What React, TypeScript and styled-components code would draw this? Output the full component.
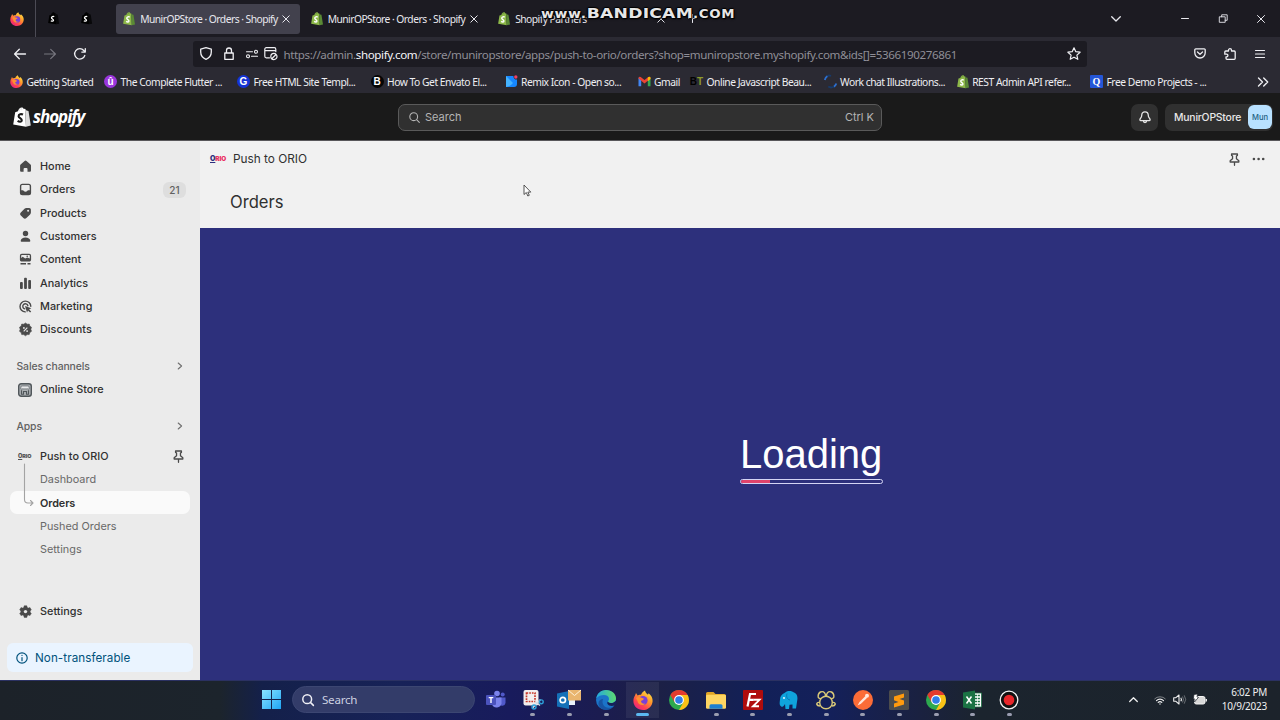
import React from 'react';
import styled, { createGlobalStyle } from 'styled-components';

const Global = createGlobalStyle`
  * { box-sizing: border-box; }
  body { margin: 0; background: #1c1b22; overflow: hidden; }
  svg { display: block; flex: none; overflow: visible; }
`;

const segoe = `'Noto Sans', 'Open Sans', sans-serif`;
const inter = `Inter, 'Liberation Sans', sans-serif`;

const Screen = styled.div`
  position: relative;
  width: 1280px;
  height: 720px;
  display: flex;
  flex-direction: column;
  font-family: ${inter};
  overflow: hidden;
`;

/* ---------- Browser chrome ---------- */
const TabBar = styled.div`
  height: 37px;
  flex: none;
  display: flex;
  align-items: center;
  background: #1c1b22;
  color: #e8e8ee;
  font-family: ${segoe};
`;
const PinnedTab = styled.div<{ $w: number; $line?: boolean }>`
  width: ${p => p.$w}px;
  height: 37px;
  display: flex;
  align-items: center;
  justify-content: center;
  padding-right: ${p => (p.$line ? 2 : 0)}px;
  border-right: ${p => (p.$line ? '1px solid #4c4b55' : '0')};
`;
const Tab = styled.div<{ $w: number; $active?: boolean }>`
  width: ${p => p.$w}px;
  height: 30px;
  display: flex;
  align-items: center;
  padding-left: 7px;
  padding-right: 10px;
  gap: 5px;
  border-radius: 3px;
  background: ${p => (p.$active ? '#42414d' : 'transparent')};
`;
const TabTitle = styled.span`
  flex: 1;
  min-width: 0;
  font-size: 10.3px;
  letter-spacing: -0.54px;
  white-space: nowrap;
`;
const WindowButtons = styled.div`
  margin-left: auto;
  display: flex;
  align-items: center;
  padding-right: 12px;
`;
const IconSlot = styled.div<{ $w: number; $gap?: number }>`
  width: ${p => p.$w}px;
  margin-left: ${p => p.$gap ?? 0}px;
  flex: none;
  display: flex;
  align-items: center;
  justify-content: center;
`;
const NavBar = styled.div`
  height: 33px;
  flex: none;
  display: flex;
  align-items: center;
  background: #2b2a33;
  color: #f0f0f4;
  padding: 0 5px;
`;
const UrlBox = styled.div`
  width: 894px;
  height: 26px;
  margin-left: 98px;
  display: flex;
  align-items: center;
  background: #1c1b22;
  border-radius: 3px;
  font-family: ${segoe};
`;
const UrlText = styled.span`
  flex: 1;
  min-width: 0;
  margin-left: 5.5px;
  padding-top: 1px;
  font-size: 11.6px;
  letter-spacing: -0.39px;
  color: #8f8e96;
  white-space: nowrap;
  b { font-weight: 400; color: #f4f4f8; }
`;
const NavRight = styled.div`
  margin-left: auto;
  display: flex;
`;
const Bookmarks = styled.div`
  height: 23px;
  flex: none;
  display: flex;
  align-items: center;
  background: #2b2a33;
  color: #eeeef2;
  padding-left: 10px;
  padding-right: 11px;
  font-family: ${segoe};
`;
const Bookmark = styled.div<{ $w: number }>`
  width: ${p => p.$w}px;
  flex: none;
  display: flex;
  align-items: center;
  gap: 3.5px;
  font-size: 10.3px;
  letter-spacing: -0.47px;
  white-space: nowrap;
`;

/* ---------- Shopify ---------- */
const TopBar = styled.header`
  height: 48px;
  flex: none;
  display: flex;
  align-items: center;
  background: #1a1a1a;
  border-bottom: 1px solid #58575a;
  padding: 1px 7px 0 13px;
`;
const Brand = styled.div`
  width: 385px;
  display: flex;
  align-items: center;
  gap: 2px;
  color: #fff;
  font: italic 700 17px 'Open Sans', sans-serif;
  letter-spacing: -1.05px;
`;
const BrandName = styled.span`
  line-height: 20px;
  margin-top: -1px;
`;
const SearchField = styled.div`
  width: 484px;
  height: 27px;
  display: flex;
  align-items: center;
  gap: 5px;
  padding: 0 7px 0 10px;
  background: #303030;
  border: 1px solid #5a5a5a;
  border-radius: 7px;
  color: #b5b5b5;
  font-size: 11px;
`;
const Hotkey = styled.span` margin-left: auto; `;
const BellButton = styled.div`
  width: 27px;
  height: 27px;
  margin-left: auto;
  display: flex;
  align-items: center;
  justify-content: center;
  background: #303030;
  border-radius: 7px;
`;
const StoreButton = styled.div`
  width: 108px;
  height: 27px;
  margin-left: 7px;
  padding-left: 9px;
  padding-right: 1px;
  display: flex;
  align-items: center;
  justify-content: space-between;
  background: #303030;
  border-radius: 7px;
  color: #e8e8e8;
  font-size: 10.4px;
  letter-spacing: -0.2px;
  font-weight: 500;
`;
const Avatar = styled.div`
  width: 24px;
  height: 24px;
  display: flex;
  align-items: center;
  justify-content: center;
  background: #b8e1ff;
  border-radius: 6px;
  color: #1d6083;
  font-size: 7.6px;
  letter-spacing: 0;
`;
const Body = styled.div`
  height: 539px;
  flex: none;
  display: flex;
`;
const Sidebar = styled.nav`
  width: 200px;
  display: flex;
  flex-direction: column;
  background: #ebebeb;
  padding-top: 13.3px;
`;
const NavRow = styled.div<{ $kind?: 'sub' | 'active' }>`
  height: 23.33px;
  flex: none;
  margin: 0 10px;
  padding: 1px 5px 0 8px;
  display: flex;
  align-items: center;
  gap: 8px;
  border-radius: 7px;
  background: ${p => (p.$kind === 'active' ? '#fafafa' : 'transparent')};
  color: ${p => (p.$kind === 'sub' ? '#686868' : '#303030')};
  font-size: 10.83px;
  font-weight: ${p => (p.$kind === 'active' ? 600 : p.$kind === 'sub' ? 400 : 500)};
  letter-spacing: ${p => (p.$kind === 'active' ? -0.1 : 0.02)}px;
`;
const RowIcon = styled.div`
  width: 14px;
  display: flex;
  justify-content: center;
  color: #4a4a4a;
`;
const RowEnd = styled.div` margin-left: auto; `;
const Count = styled.div`
  width: 23px;
  height: 16px;
  margin-right: -1px;
  display: flex;
  align-items: center;
  justify-content: center;
  background: #dedede;
  border-radius: 6px;
  color: #616161;
  font-size: 10px;
`;
const SectionHead = styled.div<{ $after?: number }>`
  height: 23.33px;
  flex: none;
  margin: 13.3px 17px ${p => p.$after ?? 0}px 16.5px;
  padding-top: 1px;
  display: flex;
  align-items: center;
  justify-content: space-between;
  color: #616161;
  font-size: 10.4px;
  letter-spacing: -0.1px;
  font-weight: 550;
`;
const SidebarFoot = styled.div`
  margin-top: 39px;
  display: flex;
  flex-direction: column;
`;
const Notice = styled.div`
  height: 29px;
  margin: 19.5px 7px 0;
  padding: 1.5px 0 0 9px;
  display: flex;
  align-items: center;
  gap: 7px;
  background: #eaf4ff;
  border-radius: 6px;
  color: #00527c;
  font-size: 11.67px;
  letter-spacing: 0.07px;
`;
const Main = styled.main`
  flex: 1;
  display: flex;
  flex-direction: column;
  background: #f1f1f1;
  color: #303030;
`;
const AppBar = styled.div`
  height: 36px;
  display: flex;
  align-items: center;
  padding: 0 15px 0 10px;
  font-size: 11.8px;
`;
const AppName = styled.span` margin-left: 7px; `;
const AppTools = styled.div`
  margin-left: auto;
  display: flex;
  align-items: center;
  gap: 11px;
  color: #4a4a4a;
`;
const PageTitle = styled.div`
  height: 51px;
  display: flex;
  align-items: center;
  padding-left: 30px;
  padding-bottom: 2px;
  font-size: 16.6px;
`;
const Stage = styled.div`
  flex: 1;
  display: flex;
  flex-direction: column;
  align-items: flex-start;
  padding: 203px 0 0 540px;
  background: #2d307c;
`;
const LoadingText = styled.div`
  height: 46px;
  line-height: 46px;
  color: #fff;
  font-family: 'Liberation Sans', Arial, sans-serif;
  font-size: 40px;
`;
const Progress = styled.div`
  width: 143px;
  height: 5px;
  margin-top: 2px;
  border: 1px solid #d4d4f4;
  border-radius: 3px;
  overflow: hidden;
`;
const ProgressFill = styled.div`
  width: 29px;
  height: 100%;
  background: #e0436b;
`;
const Pointer = styled.div`
  position: absolute;
  left: 523px;
  top: 184px;
`;
const Watermark = styled.div`
  position: absolute;
  left: 541px;
  top: 3px;
  height: 20px;
  display: flex;
  align-items: baseline;
  font-family: 'DejaVu Sans', sans-serif;
  font-weight: 700;
  line-height: 20px;
  color: #e6e6e6;
  text-shadow: 1px 1px 1px #000, -1px 0 1px #000, 0 -1px 1px #000, 0 1px 2px #000;
  transform: scaleX(1.16);
  transform-origin: 0 0;
`;
const Mark = styled.span<{ $s: number; $ls: number }>`
  font-size: ${p => p.$s}px;
  letter-spacing: ${p => p.$ls}px;
`;

/* ---------- Taskbar ---------- */
const Taskbar = styled.footer`
  height: 40px;
  flex: none;
  display: flex;
  align-items: center;
  border-top: 1px solid #2b3162;
  background: linear-gradient(90deg, #1c2229 0, #1c242c 220px, #14204a 262px, #172258 400px, #181b5c 510px, #1b1c50 600px, #1c2046 660px, #122058 760px, #14205a 830px, #1a2140 920px, #1b242e 980px, #1c232b 1280px);
  padding-left: 262px;
  padding-bottom: 2px;
  font-family: ${segoe};
`;
const TaskSearch = styled.div`
  width: 183px;
  height: 27px;
  margin-left: 11px;
  margin-right: 2.8px;
  padding-left: 9px;
  display: flex;
  align-items: center;
  gap: 8px;
  border-radius: 14px;
  background: #333c69;
  border: 1px solid #3c4672;
  color: #ccd0e0;
  font-size: 11.6px;
  letter-spacing: -0.25px;
`;
const TaskItem = styled.div<{ $active?: boolean }>`
  width: 36.67px;
  height: 37px;
  flex: none;
  display: flex;
  flex-direction: column;
  align-items: center;
  padding-top: 9px;
  gap: 3px;
  background: ${p => (p.$active ? 'linear-gradient(#ffffff10, #ffffff10) center / 33px 36px no-repeat' : 'none')};
`;
const Dot = styled.i<{ $active?: boolean }>`
  width: ${p => (p.$active ? 13 : 5)}px;
  height: 3px;
  border-radius: 2px;
  background: ${p => (p.$active ? '#5cb8f0' : '#9a9db0')};
`;
const Tray = styled.div`
  margin-left: auto;
  display: flex;
  align-items: center;
  padding-right: 13px;
`;
const Clock = styled.div`
  width: 52px;
  color: #f0f0f0;
  font-size: 10px;
  line-height: 13.3px;
  letter-spacing: -0.25px;
  text-align: right;
`;

/* ---------- Icons ---------- */
type S = { size?: number };
const Line = ({ d, w = 14, h, box, sw = 1.2, color = 'currentColor' }: { d: string; w?: number; h?: number; box?: string; sw?: number; color?: string }) => (
  <svg width={w} height={h ?? w} viewBox={box ?? `0 0 ${w} ${h ?? w}`} fill="none" stroke={color} strokeWidth={sw} strokeLinecap="round" strokeLinejoin="round">
    <path d={d} />
  </svg>
);
const Firefox = ({ size = 14 }: S) => (
  <svg width={size} height={size} viewBox="0 0 20 20">
    <defs>
      <linearGradient id="ffa" x1="0.9" y1="0" x2="0.2" y2="1">
        <stop offset="0" stopColor="#fff04a" /><stop offset="0.4" stopColor="#ff9a2b" /><stop offset="0.75" stopColor="#ff4050" /><stop offset="1" stopColor="#e0218a" />
      </linearGradient>
    </defs>
    <path d="M2 5.500 3 3l1.600 2.400C6 4.500 7 4.600 8 4.800 9 2.500 10.500 1.200 12 .5c.3 2 1.500 3 3 4.200l.6-1.500c2.700 2 4.200 4.700 4 8C19.300 16.300 15.300 20 10 20S.4 16.200.4 11C.4 8.800 1 7 2 5.500z" fill="url(#ffa)" />
    <circle cx="10" cy="10.600" r="4.600" fill="#7a3fd8" />
    <path d="M3 8c2-1.600 4-1 5.500-.2L11 8.700c-.3 1.500-2.500 1.300-3 2.600.2 2 2.200 3 4.300 2.300C10 16.500 5 15 4.500 11z" fill="#ff9130" />
  </svg>
);
const Bag = ({ size = 14, fill = '#8db849', side = '#5a8a35', ink = '#fff' }: S & { fill?: string; side?: string; ink?: string }) => (
  <svg width={size * 0.9} height={size} viewBox="0 0 18 20">
    <path d="M2.200 5.200 5 4.300C5.600 2 7 .4 8.800.4c1 0 1.600.7 2 1.700l1.200-.3 1 17.900L.2 17.400z" fill={fill} />
    <path d="M12 1.800l1.500 1.800 2 .3 2.300 14.700-4.800 1.100z" fill={side} />
    <path d="M6 4c.6-1.600 1.500-2.500 2.700-2.600M8.800 3.300c0-1-.2-1.600-.6-2" stroke={side} strokeWidth=".7" fill="none" />
    <path d="M10 7.500C8.300 6.700 5.600 7 5.600 9.200c0 2 3.200 2 3.200 4.100 0 1.800-2.400 1.800-4.200.6" stroke={ink} strokeWidth="2.100" fill="none" />
  </svg>
);
const Close = () => <Line w={8} d="M.8.8l6.400 6.400M7.200.8.8 7.200" sw={1} />;
const Chevron = () => <Line w={6} h={8} d="M1.200 1l3.400 3-3.400 3" sw={1.1} color="#707070" />;
const Pin = ({ size = 12 }: S) => (
  <Line w={size} box="0 0 12 12" d="M3.300.9h5.400v1.300l-.9.6v2.400l2.200 1.900v1.200H2V7.100l2.200-1.900V2.800l-.9-.6zM6 8.400v3" sw={1.2} color="#4a4a4a" />
);
const Chrome = ({ size = 20 }: S) => (
  <svg width={size} height={size} viewBox="0 0 20 20">
    <circle cx="10" cy="10" r="10" fill="#2da94f" />
    <path d="M10 5h8.660A10 10 0 0 1 10 20l4.330-7.500z" fill="#fbc116" />
    <path d="M1.340 5A10 10 0 0 1 18.660 5H10L5.670 12.500z" fill="#e33b2e" />
    <circle cx="10" cy="10" r="4.900" fill="#fff" /><circle cx="10" cy="10" r="3.800" fill="#2f7de9" />
  </svg>
);
const OrioMark = styled.span<{ $mono?: boolean }>`
  width: ${p => (p.$mono ? 14 : 16)}px;
  font: 900 ${p => (p.$mono ? 5.4 : 6.4)}px/8px ${inter};
  letter-spacing: -0.1px;
  color: ${p => (p.$mono ? '#555' : '#ea2f62')};
  white-space: nowrap;
`;
const OrioO = styled.span<{ $mono?: boolean }>`
  font-size: ${p => (p.$mono ? 5.6 : 7)}px;
  color: ${p => (p.$mono ? '#555' : '#2c2f7e')};
  text-decoration: underline;
`;
const Orio = ({ mono }: { mono?: boolean }) => (
  <OrioMark $mono={mono}><OrioO $mono={mono}>O</OrioO>RIO</OrioMark>
);

const ico = (children: React.ReactNode, s = 13) => (
  <svg width={s} height={s} viewBox="0 0 13 13" fill="currentColor">{children}</svg>
);
const Home = ico(<path d="M5.600.9a1.400 1.400 0 0 1 1.900 0l4 3.600c.3.300.5.700.5 1.100v4.900c0 .8-.6 1.300-1.300 1.300H8.500V9c0-.5-.4-.9-.9-.9H5.500c-.5 0-.9.4-.9.9v2.800H2.400c-.8 0-1.300-.6-1.300-1.300V5.600c0-.4.200-.8.500-1.100z" />);
const Inbox = ico(<path fillRule="evenodd" d="M3.400.7h6.200a2.500 2.500 0 0 1 2.500 2.500v6.500a2.500 2.500 0 0 1-2.500 2.500H3.400A2.500 2.500 0 0 1 .9 9.700V3.200A2.500 2.500 0 0 1 3.400.7zm0 1.400c-.7 0-1.100.5-1.100 1.100v4h1.500c.9 0 1.100 1.500 2.700 1.500s1.800-1.500 2.700-1.500h1.500v-4c0-.6-.4-1.100-1.100-1.100z" />);
const Tag = ico(<path fillRule="evenodd" d="M7.400 1.100h2.800c1 0 1.700.8 1.700 1.700v2.600c0 .8-.3 1.500-.8 2L7.400 11c-.9.900-2.200.9-3 0L1.800 8.500c-.9-.9-.9-2.200 0-3l3.700-3.700c.5-.5 1.200-.7 1.900-.7zm1.700 3.700a1 1 0 1 0 0-2 1 1 0 0 0 0 2z" />);
const Person = ico(<><circle cx="6.500" cy="3.500" r="2.700" /><path d="M6.500 7.500c2.700 0 4.800 1.500 4.800 3.300 0 .6-.4 1-1 1H2.700c-.6 0-1-.4-1-1 0-1.800 2.100-3.300 4.800-3.300z" /></>);
const Content = ico(<><path fillRule="evenodd" d="M2.800.8h7.400c1.100 0 1.900.8 1.900 1.900v4c0 1.100-.8 1.900-1.900 1.900H2.800C1.700 8.600.9 7.800.9 6.700v-4C.9 1.600 1.700.8 2.800.8zm0 1.300c-.4 0-.6.2-.6.6v2.200l1.500-1.100 2.500 1.800 2-1.200 2.600 1.100V2.700c0-.4-.2-.6-.6-.6z" /><circle cx="8.200" cy="3.200" r=".8" /><path d="M1.500 10h5.500v1.400H1.500zM8.500 10h3v1.400h-3z" /></>);
const Analytics = ico(<><rect x="1" y="5" width="2.800" height="7" rx=".9" /><rect x="5.100" y=".8" width="2.800" height="11.200" rx=".9" /><rect x="9.200" y="3" width="2.800" height="9" rx=".9" /></>);
const Marketing = ico(<><path d="M11.800 6.200A5.400 5.400 0 1 0 6.200 11.900M8.900 5.700a2.600 2.600 0 1 0-3.200 3.200" fill="none" stroke="currentColor" strokeWidth="1.400" strokeLinecap="round" /><path d="M6 6l6.300 2.300-2.200 1.100 2.100 2.100-1.100 1.100L9 10.500 8 12.500z" /></>);
const Discount = ico(<><path d="M6.500 0 8.200 1.200l2.100-.1.500 2 1.700 1.200-.7 2 .7 2-1.700 1.300-.6 2-2.100 0-1.600 1.200-1.700-1.200-2.100 0-.5-2L.5 8.300l.7-2-.7-2 1.700-1.200.5-2 2.100.1z" strokeWidth=".6" stroke="currentColor" strokeLinejoin="round" /><path d="M4.700 8.300l3.600-3.600" stroke="#ebebeb" strokeWidth="1.100" /><circle cx="4.900" cy="4.900" r=".9" fill="#ebebeb" /><circle cx="8.100" cy="8.100" r=".9" fill="#ebebeb" /></>);
const Gear = ico(<><path d="M5.200.8h2.600l.4 1.600 1.200.7 1.600-.5 1.300 2.300-1.200 1.100v1.200l1.200 1.100-1.300 2.300-1.600-.5-1.200.7-.4 1.600H5.200l-.4-1.600-1.200-.7-1.600.5L.7 8.300l1.200-1.100V6L.7 4.900 2 2.600l1.600.5 1.200-.7z" strokeWidth=".5" stroke="currentColor" strokeLinejoin="round" /><circle cx="6.500" cy="6.600" r="1.700" fill="#ebebeb" /></>);
const Store = (
  <svg width="14" height="14" viewBox="0 0 14 14">
    <rect x=".7" y=".7" width="12.600" height="12.600" rx="2.500" fill="#a9aeb1" stroke="#50565a" strokeWidth="1.400" />
    <path d="M3.300 3h7.400l.7 2.500c0 1-1.500 1-1.500 0 0 1-1.900 1-1.900 0 0 1-2 1-2 0 0 1-1.900 1-1.900 0 0 1-1.500 1-1.500 0z" fill="#e8eaeb" stroke="#50565a" strokeWidth=".6" />
    <path d="M3.500 7.200v4h2V8.500h3v2.700h2v-4" fill="none" stroke="#50565a" strokeWidth="1.100" />
  </svg>
);
const ArrowWrap = styled.div`
  position: absolute;
  left: 22px;
  top: 464px;
`;
const SubArrow = () => (
  <ArrowWrap>
    <Line w={12} h={46} d="M2.500 0v35.500q0 3.500 3.500 3.500h5M8.500 36.500 11 39l-2.500 2.500" sw={1.1} color="#a3a3a3" />
  </ArrowWrap>
);
const Spacer = styled.div` width: 14px; `;

const menu: [string, React.ReactNode][] = [
  ['Home', Home], ['Orders', Inbox], ['Products', Tag], ['Customers', Person],
  ['Content', Content], ['Analytics', Analytics], ['Marketing', Marketing], ['Discounts', Discount],
];

const Glyph = styled.span<{ $bg: string; $c?: string; $round?: boolean; $f?: string }>`
  width: 13px;
  height: 13px;
  flex: none;
  display: flex;
  align-items: center;
  justify-content: center;
  background: ${p => p.$bg};
  color: ${p => p.$c ?? '#fff'};
  border-radius: ${p => (p.$round ? '50%' : '1px')};
  font: 700 10px/13px ${p => p.$f ?? "'Liberation Sans', sans-serif"};
  letter-spacing: 0;
`;
const Olive = styled.span` color: #8d9a2c; `;

const bookmarks: { w: number; icon: React.ReactNode; text: string }[] = [
  { w: 94, text: 'Getting Started', icon: <Firefox size={13} /> },
  { w: 133, text: 'The Complete Flutter ...', icon: <Glyph $bg="#9a35dc" $round>û</Glyph> },
  { w: 133.5, text: 'Free HTML Site Templ...', icon: <Glyph $bg="#1433d6" $round>G</Glyph> },
  { w: 134, text: 'How To Get Envato El...', icon: <Glyph $bg="#050505" $round>B</Glyph> },
  {
    w: 133, text: 'Remix Icon - Open so...',
    icon: <svg width="13" height="13" viewBox="0 0 13 13"><path d="M1 1h7.500a3 3 0 0 0 3.500 3.500V9q0 3-3 3H1z" fill="#1687ff" /><path d="M1 1l7 7q-3 4-7 4z" fill="#45b3ff" /><circle cx="10.800" cy="2" r="1.700" fill="#ee3f63" /></svg>,
  },
  {
    w: 52.5, text: 'Gmail',
    icon: <svg width="13" height="13" viewBox="0 0 13 13"><path d="M.5 2.500v8.800h2.700V5z" fill="#4285f4" /><path d="M9.800 5v6.300h2.700V2.500z" fill="#34a853" /><path d="M.5 3.500Q.5 1 2.700 2l3.800 3 3.800-3q2.200-1 2.200 1.500L6.500 8.500z" fill="#ea4335" /><path d="M9.800 2.500v3.700l2.700-2.100V2.500q-1-1.500-2.700 0z" fill="#fbbc04" /></svg>,
  },
  { w: 133.5, text: 'Online Javascript Beau...', icon: <Glyph $bg="transparent" $c="#000"><span>B</span><Olive>T</Olive></Glyph> },
  {
    w: 133, text: 'Work chat Illustrations...',
    icon: <svg width="13" height="13" viewBox="0 0 13 13" fill="none" strokeWidth="1.800"><path d="M.8 5A6 6 0 0 1 3.500 1M12.300 8.500a6 6 0 0 1-2.500 3.300" stroke="#2c6fd0" /><path d="M3.500 1q1.500-1 3.500 0M9.800 11.800q-3 1.500-5.500-.3" stroke="#173a6a" /></svg>,
  },
  { w: 133.5, text: 'REST Admin API refer...', icon: <Bag size={13.5} /> },
  { w: 130, text: 'Free Demo Projects - ...', icon: <Glyph $bg="#2456d8" $f="'Liberation Serif', serif">Q</Glyph> },
];

const teams = <svg width="20" height="20" viewBox="0 0 20 20"><circle cx="11" cy="3.500" r="2.800" fill="#7b83eb" /><circle cx="16.700" cy="4.600" r="2" fill="#5059c9" /><path d="M13 7.500h6.500v5.500a3.500 3.500 0 0 1-6.500 1z" fill="#5059c9" /><path d="M6 7.500h9.500v6a5 5 0 0 1-9.500 1z" fill="#7b83eb" /><rect x="0" y="5" width="10" height="10" rx="1" fill="#4b53bc" /><path d="M2.700 7.600h4.600M5 7.600V13" stroke="#fff" strokeWidth="1.400" /></svg>;
const snip = <svg width="20" height="20" viewBox="0 0 20 20"><rect x=".5" y="0" width="15" height="15.500" rx="2" fill="#f2eeee" /><rect x="3.500" y="3" width="8.500" height="8.500" fill="none" stroke="#c8392b" strokeWidth="1.700" strokeDasharray="1.700 1" /><path d="M9.500 18 17.500 9.500M12 11.500l5 4" stroke="#d6dde4" strokeWidth="1.500" /><circle cx="11" cy="17" r="2" fill="none" stroke="#2d9fd8" strokeWidth="1.400" /><circle cx="18.300" cy="11.800" r="1.900" fill="none" stroke="#2d9fd8" strokeWidth="1.400" /></svg>;
const outlook = <svg width="24" height="20" viewBox="0 0 24 20"><path d="M10 4h8v11h-8z" fill="#e8f1fa" /><path d="M0 3.500 12 1v18L0 16.500z" fill="#1470b8" /><circle cx="5.800" cy="10" r="2.700" fill="none" stroke="#fff" strokeWidth="1.700" /><path d="M11 0h13v10.500H11z" fill="#e9b56f" /><path d="m11 0 6.500 5.500L24 0" fill="none" stroke="#fff1d8" strokeWidth="1" /></svg>;
const edge = <svg width="20" height="20" viewBox="0 0 20 20"><defs><linearGradient id="eg" x1="0" y1="0.3" x2="1" y2="0.2"><stop offset="0" stopColor="#23a7e0" /><stop offset="1" stopColor="#5fdc6c" /></linearGradient></defs><circle cx="10" cy="10" r="10" fill="#1b74c9" /><path d="M.2 8.500C1 3.500 5 0 10 0c6 0 10 4 10 8.500 0 3-2.500 4.500-4.800 4.500-2 0-3.200-.7-3.200-1.400S13 10.500 13 9c0-2.500-2.200-4-5-4S2 6 .2 8.500z" fill="url(#eg)" /><path d="M7.200 9C5.500 12 7 16.500 11 17.600c2.300.6 4.800.2 6.900-1.600-.8 1.600-3.400 4-7.900 4-4 0-7.500-3-7.600-6.500C2.500 10.500 4.500 9 7.200 9z" fill="#164e9c" opacity=".8" /><path d="M12 11.500c0 .8 1.200 1.500 3.200 1.500 1.700 0 3.500-.8 4.300-2.300L21 14l-2.500 1.500c-2.500 1-6 .5-7-1.500-.5-1-.2-2 .5-2.500z" fill="#172058" /></svg>;
const folder = <svg width="20" height="20" viewBox="0 0 20 20"><path d="M0 3.500Q0 2 1.500 2h6l2 2H18q2 0 2 2v3H0z" fill="#e0a526" /><rect y="4.800" width="20" height="14" rx="1.300" fill="#fdd562" /><path d="M3.500 18.800v-3q0-1.500 1.500-1.500h10q1.500 0 1.500 1.500v3z" fill="#1c7fd0" /></svg>;
const filezilla = <svg width="20" height="20" viewBox="0 0 20 20"><rect width="20" height="20" rx="1" fill="#b00c0c" /><path d="M4.500 16.500 7 4h6M5.700 9.800h5" stroke="#fff" strokeWidth="2.200" fill="none" /><path d="M10.500 9.800h6l-6.500 6.500h6" stroke="#fff" strokeWidth="1.900" fill="none" /></svg>;
const elephant = <svg width="20" height="20" viewBox="0 0 20 20"><path d="M5.500 3C8 0 13 .5 15 2.500c3 1 4 4.500 3.200 8L17 18.500h-3.500v-4l-3 .3-.5 4.200H6.500L6 14c-1 1.500-1.800 3.500-3.800 2.500C0 15 .8 12 1 9.500 1 6.500 3 3.800 5.500 3z" fill="#0fa3dc" /><path d="M8 3.500c-1 3 0 6 3 6.500" stroke="#0878b4" strokeWidth="1" fill="none" /><circle cx="5" cy="8" r=".9" fill="#fff" /></svg>;
const navicat = <svg width="20" height="20" viewBox="0 0 20 20" fill="none" stroke="#d8c878" strokeWidth="1.400"><circle cx="10" cy="12.500" r="6.300" /><path d="M5 8.500C1 9.500 1.500 3.500 4.500 2 8 .5 10 4 9.300 6.200M15 8.500c4 1 3.500-5 .5-6.500C12 .5 10 4 10.700 6.200" /><path d="M3.700 12.500q-2.500-.5-3 1.500.5 2 3.500 2M16.300 12.500q2.500-.5 3 1.500-.5 2-3.500 2" /></svg>;
const postman = <svg width="20" height="20" viewBox="0 0 20 20"><circle cx="10" cy="10" r="10" fill="#fb6c37" /><path d="M4.500 15.500 6.500 12l6-6 1.700 1.700-6.200 6z" fill="#ffe6da" /><circle cx="14" cy="5.700" r="2" fill="#ffe6da" /></svg>;
const sublime = <svg width="20" height="20" viewBox="0 0 20 20"><rect width="20" height="20" rx="1.500" fill="#4c4c4c" /><path d="M15 3.500v4L10.500 9 15 10.500v4L5 17.500v-4L9.500 12 5 10.300V6.500z" fill="#ff9a0e" /></svg>;
const excel = <svg width="20" height="20" viewBox="0 0 20 20"><path d="M10 3h8.500v14H10z" fill="#fff" stroke="#1e7145" strokeWidth=".8" /><path d="M12 5.500h5M12 8.500h5M12 11.500h5M12 14.500h5" stroke="#1e7145" strokeWidth="1.500" strokeDasharray="2.100 .7" /><path d="M0 2.500 12 .5v19L0 17.500z" fill="#1b7244" /><path d="m3.500 6.500 5 7M8.500 6.500l-5 7" stroke="#fff" strokeWidth="1.500" /></svg>;
const record = <svg width="20" height="20" viewBox="0 0 20 20"><circle cx="10" cy="10" r="8.800" fill="#111" stroke="#f4f4f4" strokeWidth="1.300" /><circle cx="10" cy="10" r="5.300" fill="#e8262a" /></svg>;

const tasks: { icon: React.ReactNode; dot?: boolean; active?: boolean }[] = [
  { icon: teams }, { icon: snip, dot: true }, { icon: outlook, dot: true }, { icon: edge, dot: true },
  { icon: <Firefox size={20} />, dot: true, active: true }, { icon: <Chrome /> }, { icon: folder, dot: true },
  { icon: filezilla, dot: true }, { icon: elephant, dot: true }, { icon: navicat, dot: true }, { icon: postman, dot: true },
  { icon: sublime, dot: true }, { icon: <Chrome />, dot: true }, { icon: excel, dot: true }, { icon: record, dot: true },
];

export default function App() {
  return (
    <>
      <Global />
      <Screen>
        <TabBar>
          <PinnedTab $w={36} $line><Firefox size={14} /></PinnedTab>
          <PinnedTab $w={36}><Bag size={12.5} fill="#000" side="#08080a" /></PinnedTab>
          <PinnedTab $w={30}><Bag size={12.5} fill="#000" side="#08080a" /></PinnedTab>
          <IconSlot $w={14} />
          <Tab $w={184} $active><Bag size={13.5} /><TabTitle>MunirOPStore · Orders · Shopify</TabTitle><Close /></Tab>
          <IconSlot $w={3.5} />
          <Tab $w={184}><Bag size={13.5} /><TabTitle>MunirOPStore · Orders · Shopify</TabTitle><Close /></Tab>
          <IconSlot $w={3.5} />
          <Tab $w={184}><Bag size={13.5} /><TabTitle>Shopify Partners</TabTitle><Close /></Tab>
          <IconSlot $w={35}><Line w={9} d="M4.500.5v8M.5 4.500h8" sw={1} /></IconSlot>
          <WindowButtons>
            <IconSlot $w={14}><Line w={10} h={6} d="M.7.700 5 5 9.300.7" sw={1.3} /></IconSlot>
            <IconSlot $w={14} $gap={55}><Line w={8} h={1} d="M.5 .5h7" sw={1} /></IconSlot>
            <IconSlot $w={14} $gap={24}><Line w={9} d="M.7 2.800h5.500v5.500H.7zM2.700 2.800V.8h5.500v5.500h-2" sw={0.9} /></IconSlot>
            <IconSlot $w={14} $gap={24}><Line w={8} d="M.5.5l7 7M7.500.5l-7 7" sw={1} /></IconSlot>
          </WindowButtons>
        </TabBar>

        <NavBar>
          <IconSlot $w={30}><Line w={12} d="M11.500 6H.8M5.300 1.300.6 6l4.700 4.700" sw={1.3} /></IconSlot>
          <IconSlot $w={30}><Line w={12} d="M.5 6h10.700M6.700 1.300 11.400 6l-4.700 4.700" sw={1.2} color="#77767f" /></IconSlot>
          <IconSlot $w={30}><Line w={12} d="M10.800 7.500A5.200 5.200 0 1 1 9.800 2.500L11 3.800M11.300.6v3.500H7.800" sw={1.3} /></IconSlot>
          <UrlBox>
            <IconSlot $w={25}><Line w={12} h={13} d="M6 .7 11.300 2.200V5c0 3.500-2 6-5.300 7.400C2.700 11 .7 8.500.7 5V2.200z" sw={1.3} /></IconSlot>
            <IconSlot $w={22}><Line w={10} h={13} d="M.8 6h8.400v6.300H.8zM2.500 6V3.500a2.500 2.500 0 0 1 5 0V6" sw={1.3} /></IconSlot>
            <IconSlot $w={24}><Line w={12} h={8} d="M.5 1.700h6M8.500 1.700a1.500 1.500 0 1 0 3 0 1.500 1.500 0 1 0-3 0M5.500 6.300h6M.5 6.300a1.500 1.500 0 1 0 3 0 1.500 1.500 0 1 0-3 0" sw={1.1} /></IconSlot>
            <IconSlot $w={14}><Line w={14} h={13} d="M5.500 10.800H2.300A1.500 1.500 0 0 1 .8 9.300V2.200A1.500 1.500 0 0 1 2.300.7h8a1.500 1.500 0 0 1 1.500 1.500v2.500M.8 3.700h11M6.800 9.500a3.100 3.100 0 1 0 6.200 0 3.100 3.100 0 1 0-6.200 0M8 11.500l4-4" sw={1.2} /></IconSlot>
            <UrlText>https://admin.<b>shopify.com</b>/store/muniropstore/apps/push-to-orio/orders?shop=muniropstore.myshopify.com&amp;ids[]=5366190276861</UrlText>
            <IconSlot $w={26}><Line w={14} h={13} d="M7 .8l1.800 3.900 4.300.5-3.200 2.900.9 4.200L7 10.200l-3.800 2.100.9-4.200L.9 5.200l4.300-.5z" sw={1.2} /></IconSlot>
          </UrlBox>
          <NavRight>
            <IconSlot $w={30}><Line w={12} h={11} d="M1.800.8h8.400a1 1 0 0 1 1 1v3a5.200 5.200 0 0 1-10.400 0v-3a1 1 0 0 1 1-1zM3.500 4 6 6.400 8.500 4" sw={1.3} /></IconSlot>
            <IconSlot $w={30}><Line w={12} h={12} d="M4.500 3V2.200a1.500 1.500 0 0 1 3 0V3h2.700q1 0 1 1v6.300q0 1-1 1H3q-1 0-1-1V8.800h.6a1.300 1.300 0 0 0 0-2.600H.8V4q0-1 1-1z" sw={1.3} /></IconSlot>
            <IconSlot $w={30}><Line w={10} h={8} d="M.5.5h9M.5 4h9M.5 7.500h9" sw={1.2} /></IconSlot>
          </NavRight>
        </NavBar>

        <Bookmarks>
          {bookmarks.map(b => (
            <Bookmark key={b.text} $w={b.w}>{b.icon}<span>{b.text}</span></Bookmark>
          ))}
          <NavRight><Line w={12} h={10} d="M1.500 1l4 4-4 4M6.700 1l4 4-4 4" sw={1.4} /></NavRight>
        </Bookmarks>

        <TopBar>
          <Brand><Bag size={20} fill="#fff" side="#ddd" ink="#1a1a1a" /><BrandName>shopify</BrandName></Brand>
          <SearchField>
            <Line w={11} d="M.8 4.700a3.900 3.900 0 1 0 7.800 0 3.900 3.900 0 1 0-7.800 0M7.600 7.600l2.700 2.700" sw={1.1} />
            <span>Search</span><Hotkey>Ctrl K</Hotkey>
          </SearchField>
          <BellButton><Line w={12} h={13} d="M6 .8c2.300 0 3.300 1.700 3.300 3.600 0 2.300 1.800 3 1.800 4.300 0 .6-.4.900-1 .9H1.900c-.6 0-1-.3-1-.9 0-1.300 1.800-2 1.800-4.300C2.700 2.500 3.700.8 6 .8zM4.400 9.800a1.600 1.800 0 0 0 3.200 0" sw={1.3} color="#e6e6e6" /></BellButton>
          <StoreButton>MunirOPStore<Avatar>Mun</Avatar></StoreButton>
        </TopBar>

        <Body>
          <Sidebar>
            {menu.map(([label, icon]) => (
              <NavRow key={label}>
                <RowIcon>{icon}</RowIcon>{label}
                {label === 'Orders' && <RowEnd><Count>21</Count></RowEnd>}
              </NavRow>
            ))}
            <SectionHead>Sales channels<Chevron /></SectionHead>
            <NavRow><RowIcon>{Store}</RowIcon>Online Store</NavRow>
            <SectionHead $after={6.7}>Apps<Chevron /></SectionHead>
            <NavRow><RowIcon><Orio mono /></RowIcon>Push to ORIO<RowEnd><Pin size={13} /></RowEnd></NavRow>
            <NavRow $kind="sub"><Spacer />Dashboard</NavRow>
            <NavRow $kind="active"><Spacer />Orders</NavRow>
            <NavRow $kind="sub"><Spacer />Pushed Orders</NavRow>
            <NavRow $kind="sub"><Spacer />Settings</NavRow>
            <SidebarFoot>
              <NavRow><RowIcon>{Gear}</RowIcon>Settings</NavRow>
              <Notice>
                <Line w={12} d="M.8 6a5.200 5.200 0 1 0 10.400 0A5.200 5.200 0 1 0 .8 6M6 5.500v3.200M6 3.400v.1" sw={1.2} />
                Non-transferable
              </Notice>
            </SidebarFoot>
          </Sidebar>
          <Main>
            <AppBar>
              <Orio /><AppName>Push to ORIO</AppName>
              <AppTools>
                <Pin size={13} />
                <svg width="13" height="4" viewBox="0 0 13 4" fill="currentColor"><circle cx="1.900" cy="2" r="1.300" /><circle cx="6.600" cy="2" r="1.300" /><circle cx="11.200" cy="2" r="1.300" /></svg>
              </AppTools>
            </AppBar>
            <PageTitle>Orders</PageTitle>
            <Stage>
              <LoadingText>Loading</LoadingText>
              <Progress><ProgressFill /></Progress>
            </Stage>
          </Main>
        </Body>

        <Taskbar>
          <svg width="19" height="19" viewBox="0 0 19 19">
            <defs><linearGradient id="win" x1="0" y1="0" x2="1" y2="1"><stop offset="0" stopColor="#8be4ff" /><stop offset="1" stopColor="#1fa5f5" /></linearGradient></defs>
            <path d="M0 0h9v9H0zM10 0h9v9h-9zM0 10h9v9H0zM10 10h9v9h-9z" fill="url(#win)" />
          </svg>
          <TaskSearch><Line w={12} d="M.8 5.200a4.400 4.400 0 1 0 8.800 0 4.400 4.400 0 1 0-8.800 0M8.400 8.400l3 3" sw={1.5} color="#f0f0f6" /><span>Search</span></TaskSearch>
          {tasks.map((t, i) => (
            <TaskItem key={i} $active={t.active}>{t.icon}{t.dot && <Dot $active={t.active} />}</TaskItem>
          ))}
          <Tray>
            <IconSlot $w={26}><Line w={9} h={5} d="M.7 4.500 4.500.7l3.800 3.800" sw={1.3} color="#f0f0f0" /></IconSlot>
            <IconSlot $w={28}>
              <svg width="12" height="10" viewBox="0 0 12 10" fill="none" stroke="#f0f0f0" strokeLinecap="round"><path d="M.7 3.800a7.500 7.500 0 0 1 10.600 0" strokeWidth="1" opacity=".45" /><path d="M2.500 5.600a5 5 0 0 1 7 0M4.200 7.300a2.500 2.500 0 0 1 3.600 0" strokeWidth="1.200" /><circle cx="6" cy="9" r=".7" fill="#f0f0f0" stroke="none" /></svg>
            </IconSlot>
            <IconSlot $w={10}>
              <svg width="13" height="11" viewBox="0 0 13 11" fill="none" stroke="#f0f0f0" strokeLinejoin="round"><path d="M.7 3.700h2.200L6 1v9L2.900 7.300H.7zM7.800 3.700q1.300 1.800 0 3.600" strokeWidth="1.100" /><path d="M9.500 2.500q2 3 0 6M11.200 1.300q3 4.200 0 8.400" strokeWidth=".9" opacity=".4" /></svg>
            </IconSlot>
            <IconSlot $w={31}>
              <svg width="14" height="11" viewBox="0 0 14 11"><rect x="1.500" y="2.500" width="10.500" height="7.500" rx="1.800" fill="#d8d8d8" stroke="#f4f4f4" /><path d="M13.300 5v2.500" stroke="#f0f0f0" strokeWidth="1.300" /><path d="M1 .5 4.500 0 4 3l1.500.3L1.500 8l.5-3H.3z" fill="#fff" stroke="#1c232b" strokeWidth=".7" /></svg>
            </IconSlot>
            <Clock>6:02 PM<br />10/9/2023</Clock>
          </Tray>
        </Taskbar>

        <SubArrow />
        <Pointer>
          <svg width="9" height="13" viewBox="0 0 9 13"><path d="M1 1v9.500l2.300-2 1.500 3.500 1.500-.7-1.500-3.200h3z" fill="#fff" stroke="#444" strokeWidth=".9" /></svg>
        </Pointer>
        <Watermark>
          <Mark $s={12} $ls={0.6}>www.</Mark><Mark $s={14.8} $ls={0.2}>BANDICAM</Mark><Mark $s={11.5} $ls={0.6}>.COM</Mark>
        </Watermark>
      </Screen>
    </>
  );
}
